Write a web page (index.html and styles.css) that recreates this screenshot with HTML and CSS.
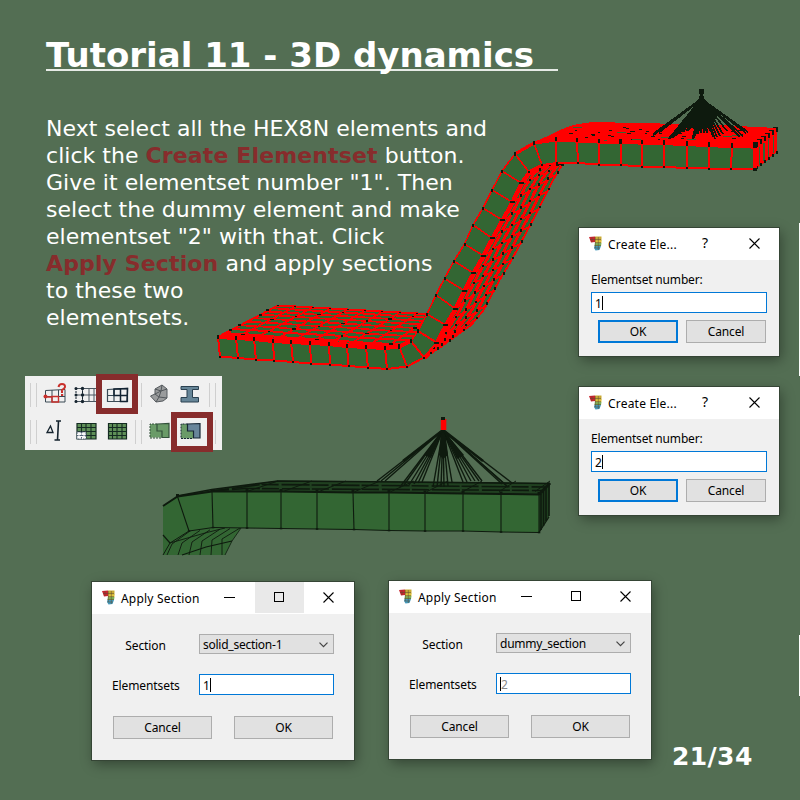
FILE: index.html
```html
<!DOCTYPE html>
<html lang="en">
<head>
<meta charset="utf-8">
<title>Tutorial 11 - 3D dynamics</title>
<link rel="stylesheet" href="styles.css">
</head>
<body>
<svg class="defs" width="0" height="0">
  <symbol id="app" viewBox="0 0 13 15">
    <path d="M0 1L6 0.500V6L2 6.500Z" fill="#c9252f"/>
    <path d="M6 0.500L12.500 0.500V5H6Z" fill="#c9aa35"/>
    <path d="M6 4.500H12.500V7H6Z" fill="#e0c53c"/>
    <path d="M6 7H12.500L12 10H5.500Z" fill="#7fae55"/>
    <path d="M5.500 10H12L10.500 14L6.500 14.500L5 12Z" fill="#4499bb"/>
    <path d="M3 1V6M6.300 1V12M9.300 1V14M1 3.500H12M6 6.500H12M5.500 9.500H12M5.500 12H11" stroke="#5b4a30" stroke-width=".5" fill="none"/>
  </symbol>
  <symbol id="close" viewBox="0 0 11 11"><path d="M.5.5L10.500 10.500M10.500.5L.5 10.500" stroke="#000" stroke-width="1.100" fill="none"/></symbol>
</svg>
<main class="slide">
  <h1 class="title">Tutorial 11 - 3D dynamics&nbsp;&nbsp;</h1>
  <p class="text">Next select all the HEX8N elements and<br>click the <b class="k1">Create Elementset</b> button.<br>Give it elementset number "1". Then<br>select the dummy element and make<br>elementset "2" with that. Click<br><b class="k2">Apply Section</b> and apply sections<br>to these two<br>elementsets.</p>

  <svg class="mesh" id="mesh" width="800" height="800" viewBox="0 0 800 800"></svg>

  <section class="toolbar">
    <div class="row">
      <i class="grip"></i>
      <span class="slot"><svg width="24" height="24" viewBox="0 0 24 24"><path d="M2.500 9.500L22 8.500V21H2.500ZM9 9V21M15.500 9V21M2.500 15.500H22" fill="none" stroke="#3a4a55"/><path d="M9 15.500H15.500V21H9ZM2 16H9" fill="none" stroke="#c9302c" stroke-width="1.400"/><circle cx="2.500" cy="15.500" r="2" fill="#c9302c"/><path d="M15.500 6Q16 3 19 3Q22.200 3 22 6Q21.500 8 19 9V12" fill="none" stroke="#c9302c" stroke-width="2"/><rect x="18" y="13" width="2.200" height="2" fill="#c9302c"/></svg></span>
      <span class="slot"><svg width="24" height="24" viewBox="0 0 24 24"><path d="M2 7.500H23.500V20.500H2M8.500 7V21M15 7V21M20 7.500V20.500M2 14H23" fill="none" stroke="#4a5660"/><path d="M2 7V21M8.500 7V21" stroke="#15232e" stroke-dasharray="2 1" fill="none"/><g fill="#15232e"><circle cx="2" cy="7.500" r="1.500"/><circle cx="2" cy="14" r="1.500"/><circle cx="2" cy="20.500" r="1.500"/><circle cx="8.500" cy="7.500" r="1.700"/><circle cx="8.500" cy="14" r="1.700"/><circle cx="8.500" cy="20.500" r="1.700"/></g></svg></span>
      <span class="slot hot"><svg width="24" height="24" viewBox="0 0 24 24"><path d="M2.500 8.500L22.500 7.500V20.500H2.500ZM9 8V20.500M2.500 14.500H9" fill="none" stroke="#3a4a55" stroke-width="1.200"/><path d="M9 8L22.500 7.500L22 20.500H15.500V14.500H9ZM15.500 8V20M9 14.500H22" fill="none" stroke="#122332" stroke-width="1.500"/></svg></span>
      <i class="sep"></i>
      <span class="slot"><svg width="24" height="24" viewBox="0 0 24 24"><path d="M8 8L15 4L20 8V17L16 20L9 21L3.500 15L8 13Z" fill="#9a9c9d" stroke="#555a5e"/><path d="M8 13L14 10L20 8M14 10L12 16L9 21M12 16L20 17M8 8L14 10L15 4M12 16L8 13" stroke="#53585c" fill="none"/></svg></span>
      <span class="slot"><svg width="24" height="24" viewBox="0 0 24 24"><path d="M3 5.500H20.500V8.500H14.500V16.500H20.500V21H3V16.500H9V8.500H3Z" fill="#668597" stroke="#2b4150"/></svg></span>
      <i class="grip end"></i>
    </div>
    <div class="row">
      <i class="grip"></i>
      <span class="slot"><svg width="24" height="24" viewBox="0 0 24 24"><path d="M4 14.500L7.500 8L10 14.500Z" fill="none" stroke="#15232e" stroke-width="1.300"/><path d="M13 3H18M11.500 22H17M15.500 3L14.500 22" stroke="#15232e" stroke-width="1.600" fill="none"/></svg></span>
      <span class="slot"><svg width="24" height="24" viewBox="0 0 24 24"><path d="M3 5.500H22V21H3Z" fill="#5f9058" stroke="#142b22" stroke-width="1.200"/><path d="M7.500 5V21M12 5V21M17 5V21M3 9.500H22M3 13.500H22M3 17.500H22" stroke="#142b22" stroke-width="1.100"/><path d="M3 14H12V21H3Z" fill="#f8f8f8"/><path d="M3 14H12V21H3ZM7.500 14V21M3 17.500H12" fill="none" stroke="#526478" stroke-dasharray="1.500 1"/></svg></span>
      <span class="slot"><svg width="24" height="24" viewBox="0 0 24 24"><path d="M3.500 5.500H21.500V21H3.500Z" fill="#5f9058" stroke="#142b22" stroke-width="1.200"/><path d="M7.500 5V21M12 5V21M17 5V21M3 9.500H22M3 13.500H22M3 17.500H22" stroke="#142b22" stroke-width="1.100"/></svg></span>
      <i class="sep dual"></i>
      <span class="slot"><svg width="24" height="24" viewBox="0 0 24 24"><path d="M3 6H22V19.500H3Z" fill="#6a9b68"/><path d="M10 6L22 5.500V19.500H15V13H10Z" fill="none" stroke="#33513b" stroke-width="1.200"/><path d="M10 6H3V20H15" fill="none" stroke="#33513b" stroke-dasharray="2 1"/></svg></span>
      <span class="slot hot two"><svg width="24" height="24" viewBox="0 0 24 24"><path d="M3 6H10V13H15V20.500H3Z" fill="#6a9b68"/><path d="M9.500 6L22 5.500V20H15.500V13H9.500Z" fill="#68859a" stroke="#172735" stroke-width="1.200"/><path d="M9.500 6H3V20.500H15" fill="none" stroke="#172735" stroke-dasharray="2 1"/></svg></span>
      <i class="grip end single"></i>
    </div>
  </section>

  <section class="win ask ask1">
    <header class="bar"><svg class="app"><use href="#app"/></svg><span class="name">Create Ele...</span><span class="help">?</span><svg class="x"><use href="#close"/></svg></header>
    <div class="body">
      <label class="lbl">Elementset number:</label>
      <div class="input">1<i class="caret"></i></div>
      <div class="btns"><button class="btn main">OK</button><button class="btn">Cancel</button></div>
    </div>
  </section>
  <section class="win ask ask2">
    <header class="bar"><svg class="app"><use href="#app"/></svg><span class="name">Create Ele...</span><span class="help">?</span><svg class="x"><use href="#close"/></svg></header>
    <div class="body">
      <label class="lbl">Elementset number:</label>
      <div class="input">2<i class="caret"></i></div>
      <div class="btns"><button class="btn main">OK</button><button class="btn">Cancel</button></div>
    </div>
  </section>

  <section class="win apply apply1">
    <header class="bar"><svg class="app"><use href="#app"/></svg><span class="name">Apply Section</span><span class="ctl"><i class="min"></i></span><span class="ctl lit"><i class="max"></i></span><span class="ctl"><svg class="x"><use href="#close"/></svg></span></header>
    <div class="body">
      <span class="lbl">Section</span>
      <div class="combo"><span>solid_section-1</span><svg width="9" height="6" viewBox="0 0 9 6"><path d="M.5.7L4.500 4.700L8.500.7" fill="none" stroke="#444" stroke-width="1.200"/></svg></div>
      <span class="lbl">Elementsets</span>
      <div class="input">1<i class="caret"></i></div>
      <div class="btns"><button class="btn">Cancel</button><button class="btn">OK</button></div>
    </div>
  </section>
  <section class="win apply apply2">
    <header class="bar"><svg class="app"><use href="#app"/></svg><span class="name">Apply Section</span><span class="ctl"><i class="min"></i></span><span class="ctl"><i class="max"></i></span><span class="ctl"><svg class="x"><use href="#close"/></svg></span></header>
    <div class="body">
      <span class="lbl">Section</span>
      <div class="combo"><span>dummy_section</span><svg width="9" height="6" viewBox="0 0 9 6"><path d="M.5.7L4.500 4.700L8.500.7" fill="none" stroke="#444" stroke-width="1.200"/></svg></div>
      <span class="lbl">Elementsets</span>
      <div class="input hint"><i class="caret"></i>2</div>
      <div class="btns"><button class="btn">Cancel</button><button class="btn">OK</button></div>
    </div>
  </section>
  <i class="edge e1"></i><i class="edge e2"></i>
  <div class="page">21/34</div>
</main>
<script src="mesh.js"></script>
</body>
</html>
```
FILE: styles.css
```css
*, *::after { box-sizing: border-box; }
body { margin: 0; background: #536e53; }
.defs { position: absolute; }
.slide {
  position: relative;
  width: 800px;
  height: 800px;
  overflow: hidden;
  padding: 35px 0 0 46px;
  background: #536e53;
  color: #fff;
  font-family: "DejaVu Sans", sans-serif;
}
.title {
  margin: 0;
  width: 512px;
  height: 36px;
  font-size: 34px;
  line-height: 40px;
  font-weight: bold;
  white-space: nowrap;
  border-bottom: 2px solid #e6ebe6;
}
.text { margin: 44px 0 0; font-size: 22px; line-height: 27px; letter-spacing: .03px; white-space: nowrap; }
.text b { color: #872c2c; letter-spacing: .13px; }
.mesh { position: absolute; left: 0; top: 0; }
.page { position: absolute; left: 672px; top: 742px; font-size: 25px; line-height: 30px; font-weight: bold; letter-spacing: .4px; }
.edge { position: absolute; left: 799px; width: 1px; background: #fff; }
.e1 { top: 223px; height: 153px; }
.e2 { top: 635px; height: 61px; }

.toolbar {
  position: absolute; left: 25px; top: 376px; width: 197px; height: 74px;
  background: #f0f0f0; display: flex; flex-direction: column;
}
.row { display: flex; align-items: center; height: 37px; padding-left: 5px; }
.grip { width: 7px; height: 24px; border: solid #cfcfcf; border-width: 0 1px; margin-right: 2px; }
.slot { width: 31px; height: 37px; display: flex; align-items: center; justify-content: center; position: relative; flex: none; }
.slot svg { display: block; margin-top: -3px; }
.row:first-child .slot svg { margin-top: -4px; }
.sep { width: 1px; height: 24px; background: #cfcfcf; margin: 0 1px 0 9px; }
.sep.dual { width: 7px; background: none; border: solid #cfcfcf; border-width: 0 1px; margin: 0 1px 0 3px; }
.grip.end { margin: 0 0 0 4px; }
.grip.end.single { border-left-color: transparent; }
.hot::after { content: ""; position: absolute; left: -5px; top: -2px; width: 42px; height: 40px; border: 6px solid #872c2c; }
.hot.two::after { left: -3px; top: -1px; }

.win {
  position: absolute; background: #f0f0f0; color: #000;
  outline: 1px solid #354535;
  box-shadow: 2px 4px 12px rgba(0,0,0,.38);
  font-family: "Noto Sans", sans-serif; font-size: 12px; line-height: 16px; letter-spacing: -.1px;
}
.bar { display: flex; align-items: center; height: 32px; background: #fff; padding-left: 10px; }
.app { width: 13px; height: 15px; margin-top: -2px; }
.name { margin: 2px 0 0 6px; white-space: nowrap; letter-spacing: .2px; }
.x { width: 11px; height: 11px; display: block; }
.input { position: relative; display: flex; align-items: center; height: 21px; border: 1px solid #0078d7; background: #fff; padding: 2px 0 0 3px; line-height: 16px; }
.caret { width: 1px; height: 14px; background: #000; margin-top: -2px; }
.hint { color: #888; }
.btn { padding: 1px 0 0; height: 23px; font: inherit; letter-spacing: -.15px; color: #000; background: #e1e1e1; border: 1px solid #adadad; border-radius: 0; }
.btn.main { border: 2px solid #0078d7; }

.ask { width: 200px; height: 128px; left: 579px; }
.ask1 { top: 228px; }
.ask2 { top: 387px; }
.ask .name { width: 70px; }
.ask .help { margin: -2px 0 0 22px; width: 10px; text-align: center; font-size: 14px; }
.ask .x { margin: -2px 0 0 39px; }
.ask .body { padding: 11px 12px 0; }
.ask .lbl { display: block; height: 21px; line-height: 18px; letter-spacing: -.17px; }
.ask .btns { display: flex; gap: 8px; padding: 7px 0 0 7px; }
.ask .btn { width: 80px; }

.apply { width: 262px; height: 178px; }
.apply1 { left: 92px; top: 582px; }
.apply2 { left: 389px; top: 581px; }
.apply .name { width: 84px; }
.ctl { width: 49.500px; height: 32px; display: flex; align-items: center; justify-content: center; padding-bottom: 2px; }
.lit { background: linear-gradient(#e9e9e9, #e9e9e9) 0 0 / 100% 31px no-repeat; }
.min { width: 11px; height: 1px; background: #000; }
.max { width: 10px; height: 10px; border: 1px solid #000; }
.apply .body { display: grid; grid-template-columns: 67px 135px; column-gap: 20px; grid-template-rows: 20px 21px 23px; row-gap: 20px; padding: 20px 0 0 20px; align-items: center; }
.apply .lbl { text-align: center; white-space: nowrap; padding-top: 3px; }
.combo { display: flex; align-items: center; justify-content: space-between; height: 20px; border: 1px solid #adadad; background: #e1e1e1; padding: 1px 5px 0 3px; letter-spacing: -.25px; }
.apply .btns { grid-column: 1 / 3; display: flex; gap: 22px; padding-left: 1px; }
.apply .btn { width: 99px; margin-top: 2px; }
```
FILE: mesh.js
```js
const RED = '#ff0000', GREEN = '#336633', DARK = '#0e1a0e';
const out = [];
const pt = p => p.map(v => v.toFixed(1)).join(',');
const poly = (pts, fill, extra = '') => out.push(`<polygon points="${pts.map(pt).join(' ')}" fill="${fill}" ${extra}/>`);
const line = (pts, c, w, extra = '') => out.push(`<polyline points="${pts.map(pt).join(' ')}" fill="none" stroke="${c}" stroke-width="${w}" ${extra}/>`);
const box = (x, y, w, h, c = DARK) => out.push(`<rect x="${(x - w / 2).toFixed(1)}" y="${(y - h / 2).toFixed(1)}" width="${w}" height="${h}" fill="${c}"/>`);
const mix = (a, b, t) => [a[0] + (b[0] - a[0]) * t, a[1] + (b[1] - a[1]) * t];

/* Selected mesh: upper and lower outline of the front face, node by node */
const U = [[218,337],[236,338],[254,339],[273,341],[291,342],[310,343],[329,344],[347,346],[366,347],[385,348],[399,346.5],[411,341],[418,331],[427,314],[436,295],[444.5,278.5],[454,261],[464.5,244],[473,225],[483,208],[492,190],[502,171],[515,154],[534,143],[556,140],[577,141],[599,142],[620.5,142.5],[642,143],[664,143.5],[687,144.5],[709,145.5],[732,146.5],[755,147]];
const L = [[220,356.5],[238,358],[256,359.5],[274,360.5],[293,362],[311,363.5],[330,364.5],[348.5,366],[368,367.5],[387,369],[407,366.5],[424,357.5],[436.5,342.5],[445.5,325],[455,308.5],[464,290.5],[473,273],[483,255.5],[492,238],[502,220],[512,202],[521,183],[529,172],[542,165],[556.5,163],[578,163],[599,164.5],[621,165],[642,166.5],[664,167],[687,168],[709,168.5],[731,169],[755,169.5]];

out.push('<g shape-rendering="crispEdges">');

/* Lower slab, top surface */
const lowTop = [...U.slice(0, 14), [278, 305.5]];
out.push(`<clipPath id="low"><polygon points="${lowTop.map(pt).join(' ')}"/></clipPath><g clip-path="url(#low)">`);
poly(lowTop, GREEN);
const back = i => [278 + 17.4 * i, 305.5 + 1.02 * i];
const rows = [0, .12, .25, .37, .49, .6, .71, .81, .91, 1];
const lowFront = i => i < 10 ? U[i] : [385 + 18.5 * (i - 9), 348 + (i - 9)];
rows.forEach((t, k) => line(Array.from({ length: 13 }, (_, i) => mix(lowFront(i), back(i), t)), RED, k < 1 ? 7 : k < 3 ? 2 : 1.7));
for (let i = 0; i < 13; i++) line([lowFront(i), back(i)], RED, 1.8);
rows.forEach((t, k) => { for (let i = 0; i < 13; i++) if ((i * 3 + k) % 4 === 0) { const p = mix(lowFront(i), back(i), t); box(p[0], p[1], i % 2 ? 4 : 2, 1.2); } });
out.push('</g>');
line([U[0], [278, 305.5], [427, 314]], RED, 2);
for (let i = 0; i < 9; i++) { const p = back(i); box(p[0], p[1], 2, 1.5); }
[[267, 310], [260, 315], [230, 330], [239, 325]].forEach(p => box(p[0], p[1], 3, 1.5));

/* Underside of the ramp */
const R = L.slice(11, 25);
const O = [[442,346],[457,335],[471,325],[483,311],[491,296],[499,281],[508,266],[517,250],[526,233],[535,216],[544,198],[553,180],[562,165],[563,165]];
poly([...R, ...O.slice().reverse()], GREEN);
for (let k = 0; k <= 5; k++) line(R.map((r, i) => mix(r, O[i], k / 5)), RED, k === 0 ? 6 : k === 5 ? 2 : 2.8);
for (let i = 0; i < R.length - 1; i++) for (let k = 0; k < 5; k++) {
  const s = (k % 2) * .5;
  line([mix(mix(R[i], R[i + 1], s), mix(O[i], O[i + 1], s), k / 5), mix(mix(R[i], R[i + 1], s + .35), mix(O[i], O[i + 1], s + .35), (k + 1) / 5)], RED, 1.8);
}
R.forEach((r, i) => { for (let k = 1; k <= 5; k++) { const n = R[Math.min(i + 1, R.length - 1)], m = O[Math.min(i + 1, O.length - 1)]; const s = (k % 2) * .5; const p = mix(mix(r, n, s), mix(O[i], m, s), k / 5); box(p[0], p[1], 2, 2.5); } });

/* Upper slab, top surface */
poly([[515,154],[534,142],[550,135],[560,130],[573,125],[592,122],[660,123.5],[727,125.5],[777,128],[777,152],[755,170],[755,147],[640,143],[560,140],[534,144]], RED);
let seed = 7;
const rnd = () => (seed = (seed * 16807) % 2147483647) / 2147483647;
for (let i = 0; i < 46; i++) {
  const y = 126 + rnd() * 14, x0 = 578 - (y - 126) * 1.3, x = x0 + rnd() * (750 - x0);
  if (i % 3) box(Math.round(x) + .5, Math.round(y) + .5, 2 + Math.round(rnd() * 2), 1);
  else if (i % 2) box(Math.round(x), Math.round(y) + .5, 9, 1, GREEN);
}
/* Right end face */
[[759.5,147,165],[764,143,161],[768.5,139,157],[773.500,136,153]].forEach(([x, a, b]) => { line([[x, a], [x, b]], GREEN, 1.5); });
for (let i = 0; i < 6; i++) {
  const x = 757 + i * 4, y = 144.500 - i * 3;
  box(x, y, 2, 5); box(x, y + 22.500, 2, 3); box(x - 2, y - 2, 4, 1);
}

/* Front face */
poly([...U, ...L.slice().reverse()], GREEN);
U.forEach((u, i) => line([u, L[i]], RED, i > 12 && i < 24 ? 1.6 : 2));
line(U.slice(0, 12), RED, 4);
line(U.slice(10, 23), RED, 1.6);
line(U.slice(22), RED, 3.2);
line(L.slice(0, 13), RED, 2);
line(L.slice(12, 24), RED, 3);
line(L.slice(23), RED, 2);
line([U[33], L[33]], RED, 4);
U.forEach((u, i) => box(u[0], u[1] - (i > 23 ? 1 : 0), i > 12 && i < 22 ? 2 : 2.5, i > 12 && i < 22 ? 3 : 4.5));
L.forEach((l, i) => box(l[0], l[1], i > 11 && i < 22 ? 5 : 2, 2));
box(755, 145.500, 4, 5); box(755, 169.500, 4, 3);

/* Coupling spider of the selected mesh */
const A = [701.5, 99];
[[653,135],[655,133],[659,132],[669,139],[672,138],[675,136],[679,134],[683,132],[687,131],[689,130],[693,139],[695,136],[698,134],[701,133],[704,133],[707,133],[710,131],[713,137],[715,139],[717,137],[720,136],[723,134],[727,131],[736,133],[740,137],[743,136],[746,133],[748,132]].forEach((p, i) => line([A, p], DARK, i < 16 ? 2.4 : 1.7));
poly([[699,98],[704,98],[717,116],[712,126],[700,130],[687,127]], DARK);
box(701.5, 91.5, 5, 5); box(701.5, 95, 3, 4); box(701.5, 98, 5, 5);
out.push('</g>');

/* Second view: dummy element highlighted */
const U2 = [[163,506],[177.5,496.5],[212,491.500],[247,491.500],[281,491.500],[317,492],[353,492.5],[389,492.5],[425,493],[463,493.5],[501,494],[539,494.5]];
const L2 = [[163,535],[189,531],[213,527.5],[247,528],[281,528.5],[317,529],[354,529.5],[389,530.5],[425,531],[463,531],[501,532],[539,532.5]];
poly([[163,555],[170,543],[189,531],[213,527],[241,528],[232,541],[225,555]], GREEN);
for (let i = 0; i < 6; i++) line([[167 + i * 11, 555], [172 + i * 10, 544 - i], [190 + i * 10, 531 - i * .6]], DARK, .9);
line([[170,543],[205,533],[225,528]], DARK, .9);
line([[182,555],[206,547],[232,541]], DARK, 1.1);
line([[241,528],[232,541],[225,555]], DARK, .8);
poly([[177.5,496.5],[212,490],[240,486],[278,480.5],[403,481.5],[550,483],[549,517],[539,532.5],[539,494]], '#204020');
[[[177,496],[212,489.500],[278,481],[403,482],[550,483.500]],[[212,491],[262,484.5],[545,487]],[[212,491],[246,488.5],[542,490.5]]].forEach((l, i) => line(l, DARK, 1.6, i ? 'stroke-dasharray="17 3 28 2"' : ''));
for (let i = 0; i < 9; i++) line([[247 + i * 36, 491.5], [278 + i * 34, 481]], DARK, 1);
poly([...U2, ...L2.slice(1).reverse(), [170,543], [163,535]], GREEN);
poly([[163,535],[170,543],[163,554.500]], GREEN);
U2.slice(1).forEach((u, i) => { line([u, L2[i + 1]], DARK, 1.1); box(u[0], u[1] - 1, 3, 3); box(L2[i + 1][0], L2[i + 1][1], 2.5, 1.5); });
line(U2, DARK, 2);
line([[163,555],[170,543],[189,531],...L2.slice(2)], DARK, 1);
line([[163,535],[170,543]], DARK, 1.2);
[[541,494,530],[543.5,491,526],[546,488,521],[549,485,516]].forEach(([x, a, b]) => line([[x, a], [x, b]], DARK, 1.6));
line([[539,494.5],[550,483]], DARK, 3);
line([[539,532.5],[549,517]], DARK, 1.2);
const B = [443, 430];
[[377,481],[381,481],[385,481],[400,487],[404,485],[409,485],[414,484],[418,483],[422,482],[433,487],[437,487],[441,487],[444,487],[448,486],[452,482],[463,482],[467,482],[471,481],[475,481],[479,481],[482,481],[502,484],[506,485],[508,487],[512,483]].forEach(p => line([B, p], DARK, 1.4));
poly([[441,430],[445,430],[448,455],[443,459],[439,455]], DARK);
poly([B, [424,455],[431,458]], DARK);
poly([B, [457,459],[464,455]], DARK);
line([B, [403,461]], DARK, 2.5);
line([B, [483,461]], DARK, 2.5);
box(443.5, 424.5, 5.500, 11, RED);
box(443, 418.5, 4, 3);
document.getElementById('mesh').innerHTML = out.join('');
```
